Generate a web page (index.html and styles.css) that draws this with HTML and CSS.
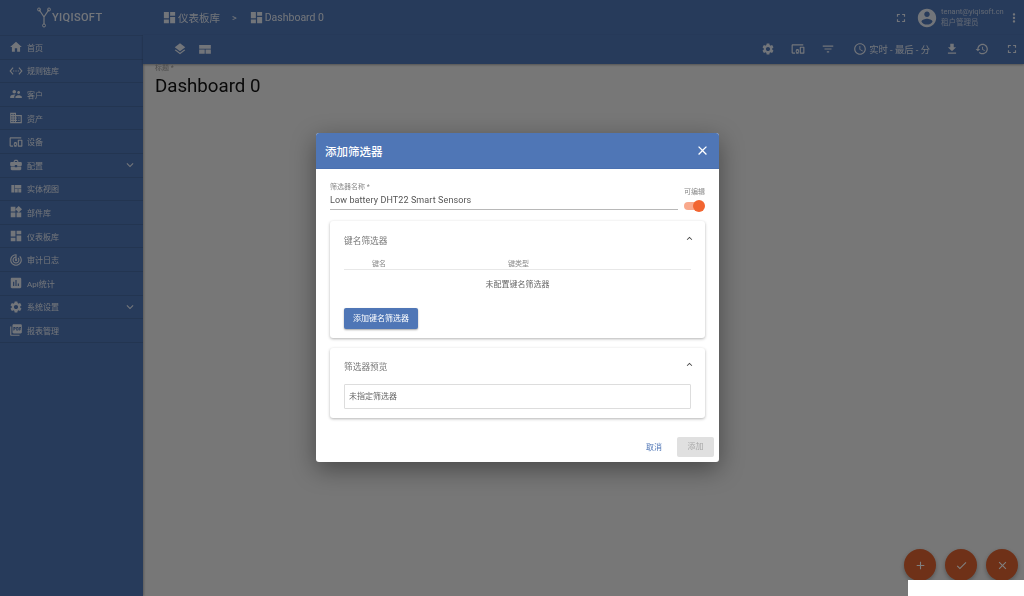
FILE: index.html
```html
<!DOCTYPE html>
<html lang="zh">
<head>
    <meta charset="utf-8">
    <title>YIQISOFT</title>
    <link rel="stylesheet" href="styles.css">
</head>
<body>
<svg class="sprite" xmlns="http://www.w3.org/2000/svg">
    <symbol id="i-home" viewBox="0 0 24 24"><path d="M10 20v-6h4v6h5v-8h3L12 3 2 12h3v8z"/></symbol>
    <symbol id="i-ethernet" viewBox="0 0 24 24"><path d="M7.77 6.76L6.23 5.48.82 12l5.41 6.52 1.54-1.28L3.42 12l4.35-5.24zM7 13h2v-2H7v2zm10-2h-2v2h2v-2zm-6 2h2v-2h-2v2zm6.77-7.52l-1.54 1.28L20.58 12l-4.35 5.24 1.54 1.28L23.18 12l-5.41-6.52z"/></symbol>
    <symbol id="i-people" viewBox="0 0 24 24"><path d="M16.5 12c1.38 0 2.49-1.12 2.49-2.5S17.88 7 16.5 7C15.12 7 14 8.12 14 9.5s1.12 2.5 2.5 2.5zM9 11c1.66 0 2.99-1.34 2.99-3S10.66 5 9 5C7.34 5 6 6.34 6 8s1.34 3 3 3zm7.5 3c-1.83 0-5.5.92-5.5 2.75V19h11v-2.25c0-1.83-3.67-2.75-5.5-2.75zM9 13c-2.33 0-7 1.17-7 3.5V19h7v-2.25c0-.85.33-2.34 2.37-3.47C10.5 13.1 9.66 13 9 13z"/></symbol>
    <symbol id="i-domain" viewBox="0 0 24 24"><path d="M12 7V3H2v18h20V7H12zM6 19H4v-2h2v2zm0-4H4v-2h2v2zm0-4H4V9h2v2zm0-4H4V5h2v2zm4 12H8v-2h2v2zm0-4H8v-2h2v2zm0-4H8V9h2v2zm0-4H8V5h2v2zm10 12h-8v-2h2v-2h-2v-2h2v-2h-2V9h8v10zm-2-8h-2v2h2v-2zm0 4h-2v2h2v-2z"/></symbol>
    <symbol id="i-devices" viewBox="0 0 24 24"><path d="M3 6h18V4H3c-1.1 0-2 .9-2 2v12c0 1.1.9 2 2 2h4v-2H3V6zm10 6H9v1.78c-.61.55-1 1.33-1 2.22s.39 1.67 1 2.22V20h4v-1.78c.61-.55 1-1.34 1-2.22s-.39-1.67-1-2.22V12zm-2 5.5c-.83 0-1.5-.67-1.5-1.5s.67-1.5 1.5-1.5 1.5.67 1.5 1.5-.67 1.5-1.5 1.5zM22 8h-6c-.5 0-1 .5-1 1v10c0 .5.5 1 1 1h6c.5 0 1-.5 1-1V9c0-.5-.5-1-1-1zm-1 10h-4v-8h4v8z"/></symbol>
    <symbol id="i-case" viewBox="0 0 24 24"><path d="M10 16v-1H3.01L3 19c0 1.11.89 2 2 2h14c1.11 0 2-.89 2-2v-4h-7v1h-4zm10-9h-4.01V5l-2-2h-4l-2 2v2H4c-1.1 0-2 .9-2 2v3c0 1.11.89 2 2 2h6v-2h4v2h6c1.1 0 2-.9 2-2V9c0-1.1-.9-2-2-2zm-6 0h-4V5h4v2z"/></symbol>
    <symbol id="i-quilt" viewBox="0 0 24 24"><path d="M10 18h5v-6h-5v6zm-6 0h5V5H4v13zm12 0h5v-6h-5v6zM10 5v6h11V5H10z"/></symbol>
    <symbol id="i-widgets" viewBox="0 0 24 24"><path d="M13 13v8h8v-8h-8zM3 21h8v-8H3v8zM3 3v8h8V3H3zm13.66-1.31L11 7.34 16.66 13l5.66-5.66-5.66-5.65z"/></symbol>
    <symbol id="i-dashboard" viewBox="0 0 24 24"><path d="M3 13h8V3H3v10zm0 8h8v-6H3v6zm10 0h8V11h-8v10zm0-18v6h8V3h-8z"/></symbol>
    <symbol id="i-track" viewBox="0 0 24 24"><path d="M19.07 4.93l-1.41 1.41C19.1 7.79 20 9.79 20 12c0 4.42-3.58 8-8 8s-8-3.58-8-8c0-4.08 3.05-7.44 7-7.93v2.02C8.16 6.57 6 9.03 6 12c0 3.31 2.69 6 6 6s6-2.69 6-6c0-1.66-.67-3.16-1.76-4.24l-1.41 1.41C15.55 9.9 16 10.9 16 12c0 2.21-1.79 4-4 4s-4-1.79-4-4c0-1.86 1.28-3.41 3-3.86v2.14c-.6.35-1 .98-1 1.72 0 1.1.9 2 2 2s2-.9 2-2c0-.74-.4-1.38-1-1.72V2h-1C6.48 2 2 6.48 2 12s4.48 10 10 10 10-4.48 10-10c0-2.76-1.12-5.26-2.93-7.07z"/></symbol>
    <symbol id="i-assess" viewBox="0 0 24 24"><path d="M19 3H5c-1.1 0-2 .9-2 2v14c0 1.1.9 2 2 2h14c1.1 0 2-.9 2-2V5c0-1.1-.9-2-2-2zM9 17H7v-7h2v7zm4 0h-2V7h2v10zm4 0h-2v-4h2v4z"/></symbol>
    <symbol id="i-gear" viewBox="0 0 24 24"><path d="M19.14 12.94c.04-.3.06-.61.06-.94 0-.32-.02-.64-.07-.94l2.03-1.58c.18-.14.23-.41.12-.61l-1.92-3.32c-.12-.22-.37-.29-.59-.22l-2.39.96c-.5-.38-1.03-.7-1.62-.94l-.36-2.54c-.04-.24-.24-.41-.48-.41h-3.84c-.24 0-.43.17-.47.41l-.36 2.54c-.59.24-1.13.57-1.62.94l-2.39-.96c-.22-.08-.47 0-.59.22L2.74 8.87c-.12.21-.08.47.12.61l2.03 1.58c-.05.3-.09.63-.09.94s.02.64.07.94l-2.03 1.58c-.18.14-.23.41-.12.61l1.92 3.32c.12.22.37.29.59.22l2.39-.96c.5.38 1.03.7 1.62.94l.36 2.54c.05.24.24.41.48.41h3.84c.24 0 .44-.17.47-.41l.36-2.54c.59-.24 1.13-.56 1.62-.94l2.39.96c.22.08.47 0 .59-.22l1.92-3.32c.12-.22.07-.47-.12-.61l-2.01-1.58zM12 15.6c-1.98 0-3.6-1.62-3.6-3.6s1.62-3.6 3.6-3.6 3.6 1.62 3.6 3.6-1.62 3.6-3.6 3.6z"/></symbol>
    <symbol id="i-pdf" viewBox="0 0 24 24"><path d="M20 2H8c-1.1 0-2 .9-2 2v12c0 1.1.9 2 2 2h12c1.1 0 2-.9 2-2V4c0-1.1-.9-2-2-2zm-8.5 7.5c0 .83-.67 1.5-1.5 1.5H9v2H7.5V7H10c.83 0 1.5.67 1.5 1.5v1zm5 2c0 .83-.67 1.5-1.5 1.5h-2.5V7H15c.83 0 1.5.67 1.5 1.5v3zm4-3H19v1h1.5V11H19v2h-1.5V7h3v1.5zM9 9.5h1v-1H9v1zM4 6H2v14c0 1.1.9 2 2 2h14v-2H4V6zm10 5.5h1v-3h-1v3z"/></symbol>
    <symbol id="i-more" viewBox="0 0 24 24"><path d="M16.59 8.59L12 13.17 7.41 8.59 6 10l6 6 6-6z"/></symbol>
    <symbol id="i-less" viewBox="0 0 24 24"><path d="M12 8l-6 6 1.41 1.41L12 10.83l4.59 4.58L18 14z"/></symbol>
    <symbol id="i-layers" viewBox="0 0 24 24"><path d="M11.99 18.54l-7.37-5.73L3 14.07l9 7 9-7-1.63-1.27-7.38 5.74zM12 16l7.36-5.73L21 9l-9-7-9 7 1.63 1.27L12 16z"/></symbol>
    <symbol id="i-compact" viewBox="0 0 24 24"><path d="M2 5h20v6.5H2zM2 13h9.5v7H2zM13 13h9v7h-9z"/></symbol>
    <symbol id="i-full" viewBox="0 0 24 24"><path d="M7 14H5v5h5v-2H7v-3zm-2-4h2V7h3V5H5v5zm12 7h-3v2h5v-5h-2v3zM14 5v2h3v3h2V5h-5z"/></symbol>
    <symbol id="i-account" viewBox="0 0 24 24"><path d="M12 2C6.48 2 2 6.48 2 12s4.48 10 10 10 10-4.48 10-10S17.52 2 12 2zm0 3c1.66 0 3 1.34 3 3s-1.34 3-3 3-3-1.34-3-3 1.34-3 3-3zm0 14.2c-2.5 0-4.71-1.28-6-3.22.03-1.99 4-3.08 6-3.08 1.99 0 5.97 1.09 6 3.08-1.29 1.94-3.5 3.22-6 3.22z"/></symbol>
    <symbol id="i-vert" viewBox="0 0 24 24"><path d="M12 8c1.1 0 2-.9 2-2s-.9-2-2-2-2 .9-2 2 .9 2 2 2zm0 2c-1.1 0-2 .9-2 2s.9 2 2 2 2-.9 2-2-.9-2-2-2zm0 6c-1.1 0-2 .9-2 2s.9 2 2 2 2-.9 2-2-.9-2-2-2z"/></symbol>
    <symbol id="i-filter" viewBox="0 0 24 24"><path d="M10 18h4v-2h-4v2zM3 6v2h18V6H3zm3 7h12v-2H6v2z"/></symbol>
    <symbol id="i-clock" viewBox="0 0 24 24"><path d="M11.99 2C6.47 2 2 6.48 2 12s4.47 10 9.99 10C17.52 22 22 17.52 22 12S17.52 2 11.99 2zM12 20c-4.42 0-8-3.58-8-8s3.58-8 8-8 8 3.58 8 8-3.58 8-8 8zm.5-13H11v6l5.25 3.15.75-1.23-4.5-2.67z"/></symbol>
    <symbol id="i-download" viewBox="0 0 24 24"><path d="M19 9h-4V3H9v6H5l7 7 7-7zM5 18v2h14v-2H5z"/></symbol>
    <symbol id="i-history" viewBox="0 0 24 24"><path d="M13 3c-4.97 0-9 4.03-9 9H1l3.89 3.89.07.14L9 12H6c0-3.87 3.13-7 7-7s7 3.13 7 7-3.13 7-7 7c-1.93 0-3.68-.79-4.94-2.06l-1.42 1.42C8.27 19.99 10.51 21 13 21c4.97 0 9-4.03 9-9s-4.03-9-9-9zm-1 5v5l4.28 2.54.72-1.21-3.5-2.08V8H12z"/></symbol>
    <symbol id="i-close" viewBox="0 0 24 24"><path d="M19 6.41L17.59 5 12 10.59 6.41 5 5 6.41 10.59 12 5 17.59 6.41 19 12 13.41 17.59 19 19 17.59 13.41 12z"/></symbol>
    <symbol id="i-add" viewBox="0 0 24 24"><path d="M19 13h-6v6h-2v-6H5v-2h6V5h2v6h6v2z"/></symbol>
    <symbol id="i-done" viewBox="0 0 24 24"><path d="M9 16.17L4.83 12l-1.42 1.41L9 19 21 7l-1.41-1.41z"/></symbol>
</svg>

<div class="app">
    <div class="sidebar">
        <div class="logo">
            <svg class="logo-mark" viewBox="0 0 14 21">
                <path d="M2 2.5L7 10M12 2.5L7 10V17" fill="none" stroke="currentColor" stroke-width="1.2"/>
                <circle cx="2" cy="2.5" r="1.5" fill="none" stroke="currentColor"/>
                <circle cx="12" cy="2.5" r="1.5" fill="none" stroke="currentColor"/>
                <circle cx="7" cy="18.5" r="1.5" fill="none" stroke="currentColor"/>
            </svg>
            <span>YIQISOFT</span>
        </div>
        <div class="nav-row"><svg class="nav-icon"><use href="#i-home"/></svg>首页</div>
        <div class="nav-row"><svg class="nav-icon"><use href="#i-ethernet"/></svg>规则链库</div>
        <div class="nav-row"><svg class="nav-icon"><use href="#i-people"/></svg>客户</div>
        <div class="nav-row"><svg class="nav-icon"><use href="#i-domain"/></svg>资产</div>
        <div class="nav-row"><svg class="nav-icon"><use href="#i-devices"/></svg>设备</div>
        <div class="nav-row"><svg class="nav-icon"><use href="#i-case"/></svg>配置<svg class="nav-arrow"><use href="#i-more"/></svg></div>
        <div class="nav-row"><svg class="nav-icon"><use href="#i-quilt"/></svg>实体视图</div>
        <div class="nav-row"><svg class="nav-icon"><use href="#i-widgets"/></svg>部件库</div>
        <div class="nav-row"><svg class="nav-icon"><use href="#i-dashboard"/></svg>仪表板库</div>
        <div class="nav-row"><svg class="nav-icon"><use href="#i-track"/></svg>审计日志</div>
        <div class="nav-row"><svg class="nav-icon"><use href="#i-assess"/></svg>Api统计</div>
        <div class="nav-row"><svg class="nav-icon"><use href="#i-gear"/></svg>系统设置<svg class="nav-arrow"><use href="#i-more"/></svg></div>
        <div class="nav-row"><svg class="nav-icon"><use href="#i-pdf"/></svg>报表管理</div>
    </div>

    <div class="main">
        <div class="topbar">
            <div class="crumbs">
                <svg class="crumb-icon"><use href="#i-dashboard"/></svg>
                <span>仪表板库</span>
                <span class="crumb-sep">&gt;</span>
                <svg class="crumb-icon"><use href="#i-dashboard"/></svg>
                <span>Dashboard 0</span>
            </div>
            <div class="user">
                <svg class="tool-icon"><use href="#i-full"/></svg>
                <svg class="avatar"><use href="#i-account"/></svg>
                <div class="user-text">
                    <div>tenant@yiqisoft.cn</div>
                    <div>租户管理员</div>
                </div>
                <svg class="tool-icon"><use href="#i-vert"/></svg>
            </div>
        </div>
        <div class="toolbar">
            <div class="tools-left">
                <svg class="tool-icon"><use href="#i-layers"/></svg>
                <svg class="tool-icon"><use href="#i-compact"/></svg>
            </div>
            <div class="tools-right">
                <svg class="tool-icon"><use href="#i-gear"/></svg>
                <svg class="tool-icon"><use href="#i-devices"/></svg>
                <svg class="tool-icon"><use href="#i-filter"/></svg>
                <div class="timewindow"><svg class="tool-icon"><use href="#i-clock"/></svg>实时 - 最后 - 分</div>
                <svg class="tool-icon"><use href="#i-download"/></svg>
                <svg class="tool-icon"><use href="#i-history"/></svg>
                <svg class="tool-icon"><use href="#i-full"/></svg>
            </div>
        </div>
        <div class="content">
            <div class="title-label">标题 *</div>
            <div class="title-value">Dashboard 0</div>
        </div>
    </div>
</div>

<div class="fabs">
    <div class="fab"><svg><use href="#i-add"/></svg></div>
    <div class="fab"><svg><use href="#i-done"/></svg></div>
    <div class="fab"><svg><use href="#i-close"/></svg></div>
</div>

<div class="backdrop">
    <div class="dialog">
        <div class="dialog-head">
            <span>添加筛选器</span>
            <svg class="dialog-close"><use href="#i-close"/></svg>
        </div>
        <div class="dialog-body">
            <div class="name-row">
                <div class="name-field">
                    <div class="name-label">筛选器名称 *</div>
                    <div class="name-value">Low battery DHT22 Smart Sensors</div>
                </div>
                <div class="editable">
                    <div>可编辑</div>
                    <div class="toggle"><div class="toggle-thumb"></div></div>
                </div>
            </div>

            <div class="panel">
                <div class="panel-head">键名筛选器<svg class="panel-arrow"><use href="#i-less"/></svg></div>
                <div class="key-head">
                    <span class="key-col">键名</span>
                    <span>键类型</span>
                </div>
                <div class="key-empty">未配置键名筛选器</div>
                <div class="btn-add-key">添加键名筛选器</div>
            </div>

            <div class="panel panel-preview">
                <div class="panel-head">筛选器预览<svg class="panel-arrow"><use href="#i-less"/></svg></div>
                <div class="preview-box">未指定筛选器</div>
            </div>
        </div>
        <div class="dialog-actions">
            <span class="btn-cancel">取消</span>
            <span class="btn-submit">添加</span>
        </div>
    </div>
</div>

<div class="corner"></div>
</body>
</html>
```

FILE: styles.css
```css
* {
    box-sizing: border-box;
}
html, body {
    margin: 0;
    height: 596px;
    overflow: hidden;
}
body {
    position: relative;
    font-family: Roboto, "Noto Sans CJK SC", sans-serif;
    background: #eeeeee;
}
.sprite {
    display: none;
}
svg {
    fill: currentColor;
}
.app {
    display: flex;
    height: 596px;
    filter: blur(.35px);
}

/* sidebar */
.sidebar {
    width: 143px;
    flex: none;
    background: #4f76b6;
    color: rgba(255, 255, 255, .85);
    box-shadow: 1px 0 2px rgba(0, 0, 0, .25);
}
.logo {
    height: 36px;
    display: flex;
    align-items: center;
    padding-left: 37px;
    font-size: 11px;
    font-weight: 500;
    letter-spacing: .35px;
    border-bottom: 1px solid rgba(0, 0, 0, .08);
}
.logo-mark {
    width: 14px;
    height: 21px;
    margin-right: 1px;
}
.nav-row {
    height: 23.6px;
    display: flex;
    align-items: center;
    padding-left: 8.5px;
    font-size: 8px;
    border-bottom: 1px solid rgba(0, 0, 0, .1);
}
.nav-icon {
    width: 14px;
    height: 14px;
    margin-right: 4.5px;
    flex: none;
}
.nav-arrow {
    width: 14px;
    height: 14px;
    margin-left: auto;
    margin-right: 6px;
}

/* top bars */
.main {
    flex: 1;
    min-width: 0;
    display: flex;
    flex-direction: column;
}
.topbar {
    height: 35px;
    background: #4f76b6;
    color: rgba(255, 255, 255, .85);
    display: flex;
    align-items: center;
    justify-content: space-between;
    padding: 0 3px 0 19px;
}
.crumbs {
    display: flex;
    align-items: center;
    font-size: 10.5px;
}
.crumb-icon {
    width: 15px;
    height: 15px;
    margin-right: 1px;
}
.crumb-sep {
    margin: 0 12px;
    font-size: 9px;
}
.user {
    display: flex;
    align-items: center;
}
.tool-icon {
    width: 14px;
    height: 14px;
    flex: none;
}
.avatar {
    width: 22px;
    height: 22px;
    margin: 0 3px 0 8px;
}
.user-text {
    width: 66px;
    font-size: 7.5px;
    line-height: 10.5px;
    opacity: .75;
}
.toolbar {
    height: 29px;
    background: #4f76b6;
    color: rgba(255, 255, 255, .85);
    display: flex;
    align-items: center;
    justify-content: space-between;
    padding: 0 5px 2px 30px;
    box-shadow: 0 1px 2px rgba(0, 0, 0, .3);
}
.tools-left {
    display: flex;
    gap: 11px;
}
.tools-right {
    display: flex;
    align-items: center;
    gap: 16px;
}
.timewindow {
    display: flex;
    align-items: center;
    gap: 2px;
    font-size: 9.3px;
    margin: 0 -1px 0 2px;
}

/* dashboard title */
.content {
    padding: 0 12px;
}
.title-label {
    font-size: 7px;
    line-height: 8px;
    color: #9a9a9a;
}
.title-value {
    font-size: 18.7px;
    line-height: 28px;
    color: #111;
}

/* action buttons */
.fabs {
    position: absolute;
    right: 6px;
    top: 549px;
    display: flex;
    gap: 9px;
    filter: blur(.35px);
}
.fab {
    width: 32px;
    height: 32px;
    border-radius: 50%;
    background: #df6230;
    color: #fff;
    display: flex;
    align-items: center;
    justify-content: center;
    box-shadow: 0 2px 4px rgba(0, 0, 0, .3);
}
.fab svg {
    width: 13px;
    height: 13px;
}

/* dialog */
.backdrop {
    position: absolute;
    left: 0;
    top: 0;
    width: 1024px;
    height: 596px;
    background: rgba(0, 0, 0, .5);
    padding: 133px 0 0 316px;
}
.dialog {
    width: 403px;
    height: 329px;
    background: #fff;
    border-radius: 3px;
    overflow: hidden;
    box-shadow: 0 7px 24px rgba(0, 0, 0, .4);
    color: #666;
    filter: blur(.3px);
}
.dialog-head {
    height: 36px;
    background: #4f76b6;
    color: #fff;
    display: flex;
    align-items: center;
    justify-content: space-between;
    padding: 0 9px;
    font-size: 11.5px;
    font-weight: 500;
    border-bottom: 1px solid #4a70b0;
}
.dialog-close {
    width: 15px;
    height: 15px;
}
.dialog-body {
    padding: 13px 14px 0;
}
.name-row {
    display: flex;
    justify-content: space-between;
    height: 39px;
}
.name-field {
    width: 348px;
    height: 28px;
    padding-top: 1px;
    border-bottom: 1px solid #b8b8b8;
}
.name-label {
    font-size: 7px;
    line-height: 9px;
    color: #8a8a8a;
}
.name-value {
    font-size: 9px;
    line-height: 17px;
    letter-spacing: .1px;
    color: #555;
}
.editable {
    width: 21px;
    font-size: 7px;
    color: #888;
    padding-top: 6px;
    line-height: 9px;
    white-space: nowrap;
}
.toggle {
    position: relative;
    width: 19px;
    height: 8px;
    margin-top: 5px;
    border-radius: 4px;
    background: #f9a98c;
}
.toggle-thumb {
    position: absolute;
    right: -2px;
    top: -2px;
    width: 12px;
    height: 12px;
    border-radius: 50%;
    background: #f26531;
}
.panel {
    height: 117px;
    padding: 0 14px;
    border-radius: 3px;
    box-shadow: 0 1px 3px rgba(0, 0, 0, .3);
    font-size: 8px;
}
.panel-preview {
    height: 70px;
    margin-top: 10px;
}
.panel-head {
    height: 38px;
    display: flex;
    align-items: center;
    justify-content: space-between;
    font-size: 8.7px;
    color: #777;
}
.panel-preview .panel-head {
    height: 36px;
}
.panel-arrow {
    width: 11px;
    height: 11px;
    margin-top: -4px;
    margin-right: -4px;
    color: #444;
}
.key-head {
    display: flex;
    height: 11px;
    padding-left: 28px;
    font-size: 7px;
    line-height: 11px;
    color: #888;
    border-bottom: 1px solid #e8e8e8;
}
.key-col {
    width: 136px;
}
.key-empty {
    height: 38px;
    padding-top: 9px;
    line-height: 11px;
    text-align: center;
}
.btn-add-key {
    width: 74px;
    height: 21px;
    background: #4f76b6;
    color: #fff;
    border-radius: 2px;
    text-align: center;
    line-height: 21px;
    box-shadow: 0 1px 2px rgba(0, 0, 0, .35);
}
.preview-box {
    height: 25px;
    padding-left: 4px;
    line-height: 23px;
    border: 1px solid #ddd;
    border-radius: 1px;
}
.dialog-actions {
    display: flex;
    justify-content: flex-end;
    align-items: center;
    gap: 15px;
    padding: 19px 5px 0 0;
    font-size: 8px;
}
.btn-cancel {
    color: #4f76b6;
    margin-bottom: 1px;
}
.btn-submit {
    width: 37px;
    height: 20px;
    background: #e0e0e0;
    color: #a8a8a8;
    border-radius: 2px;
    text-align: center;
    line-height: 20px;
}

/* white patch at the bottom right of the capture */
.corner {
    position: absolute;
    right: 0;
    bottom: 0;
    width: 116px;
    height: 16px;
    background: #fff;
}
```
